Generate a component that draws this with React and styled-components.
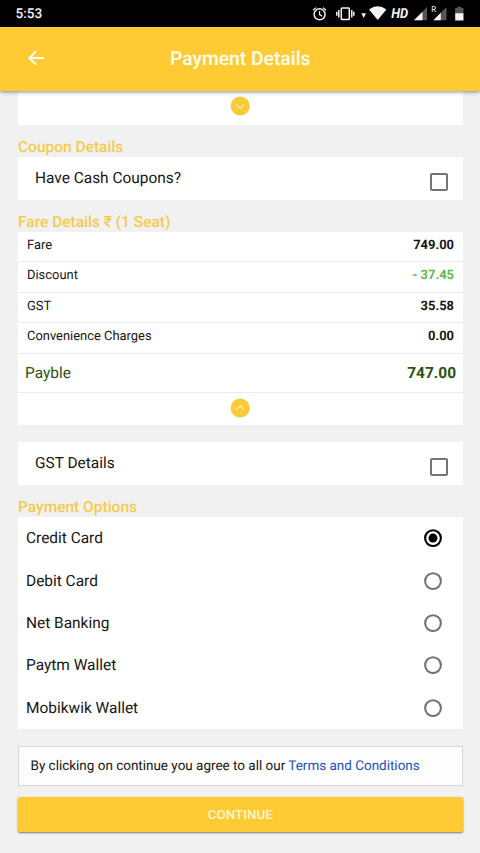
import React, { useState } from "react";
import styled, { createGlobalStyle } from "styled-components";

const GlobalStyle = createGlobalStyle`
  * { box-sizing: border-box; }
  body {
    margin: 0;
    background: #f1f1f1;
    color: #161616;
    font-family: Roboto, "Noto Sans", sans-serif;
    text-rendering: geometricPrecision;
  }
`;

const Screen = styled.div`
  width: 480px;
  height: 853px;
  overflow: hidden;
  background: #f1f1f1;
`;

const StatusBar = styled.div`
  height: 27px;
  padding: 0 14px 0 15.5px;
  display: flex;
  align-items: center;
  justify-content: space-between;
  background: #000;
  color: #f4f4f4;
`;

const Clock = styled.span`
  font-size: 13.6px;
  font-weight: 500;
  line-height: 27px;
  padding-top: 2px;
`;

const StatusIcons = styled.svg`
  width: 156px;
  height: 27px;
  display: block;
  fill: #f4f4f4;
`;

const Header = styled.header`
  position: relative;
  height: 64px;
  display: grid;
  grid-template-columns: 72px 1fr 72px;
  align-items: center;
  background: #ffcb35;
  box-shadow: 0 1px 4px rgba(0, 0, 0, 0.45);
`;

const BackButton = styled.button`
  height: 64px;
  padding: 0 0 2px;
  border: 0;
  background: none;
  display: grid;
  place-items: center;
`;

const BackIcon = styled.svg`
  width: 24px;
  height: 24px;
  display: block;
  fill: none;
  stroke: #fffdf0;
  stroke-width: 2;
`;

const Title = styled.h1`
  margin: 0;
  padding-left: 0.6px;
  text-align: center;
  font-size: 19.3px;
  font-weight: 500;
  line-height: 24px;
  color: #fffdf0;
`;

const Content = styled.main`
  padding: 0 17.5px 0 18px;
`;

const Card = styled.section`
  background: #fff;
`;

const SectionTitle = styled.h2`
  height: 32px;
  margin: 0;
  padding-top: 13px;
  font-size: 15.5px;
  font-weight: 500;
  line-height: 19px;
  color: #f5cb4c;
`;

const ToggleRow = styled.div`
  height: ${(p) => p.$height}px;
  display: flex;
  justify-content: center;
  padding-top: ${(p) => p.$top}px;
`;

const ToggleIcon = styled.svg`
  width: 20px;
  height: 20px;
  display: block;
`;

const CheckRow = styled.label`
  height: 43px;
  margin-top: ${(p) => p.$gap || 0}px;
  padding: 0 14.5px 0 17px;
  display: flex;
  justify-content: space-between;
  background: #fff;
  font-size: 15.45px;
  line-height: 42px;
`;

const CheckBox = styled.input`
  appearance: none;
  width: 18px;
  height: 18px;
  margin: 16px 0 0;
  border: 2px solid #747474;
  border-radius: 2px;
`;

const FareRow = styled.div`
  height: 30.4px;
  padding: 0 8.5px 0 9px;
  display: flex;
  justify-content: space-between;
  border-bottom: 1px solid #ececec;
  font-size: 12.93px;
  line-height: 27px;
`;

const Amount = styled.span`
  font-weight: 700;
  color: ${(p) => (p.$discount ? "#62b84a" : "#161616")};
`;

const PayableRow = styled.div`
  height: 39.4px;
  padding: 0 6.5px 0 7px;
  display: flex;
  justify-content: space-between;
  border-bottom: 1px solid #ececec;
  font-size: 15.45px;
  line-height: 38px;
  color: #2c5211;
`;

const PayableAmount = styled.strong`
  font-weight: 700;
`;

const Option = styled.label`
  height: 42.4px;
  padding: 0 20.5px 0 8px;
  display: flex;
  align-items: center;
  justify-content: space-between;
  font-size: 15.45px;
  line-height: 20px;
`;

const RadioBox = styled.span`
  display: flex;
`;

const HiddenRadio = styled.input`
  appearance: none;
  width: 0;
  height: 0;
  margin: 0;
`;

const RadioIcon = styled.svg`
  width: 18px;
  height: 18px;
  display: block;
  fill: none;
  stroke: ${(p) => (p.$checked ? "#000" : "#747474")};
  stroke-width: 2.1;
`;

const Terms = styled.p`
  height: 40px;
  margin: 17px 0 11px;
  padding-left: 11.5px;
  border: 1px solid #d6d8d8;
  background: #fdfdfd;
  font-size: 13.48px;
  line-height: 39px;
  white-space: nowrap;
`;

const TermsLink = styled.a`
  color: #1b4fc0;
`;

const ContinueButton = styled.button`
  width: 100%;
  height: 35px;
  display: block;
  padding: 0;
  border: 0;
  border-radius: 2px;
  background: #ffcb35;
  box-shadow: 0 1px 2px rgba(0, 0, 0, 0.5);
  color: #fff6d0;
  font-family: inherit;
  font-size: 13.4px;
  font-weight: 500;
  line-height: 35px;
`;

const FARES = [
  { label: "Fare", amount: "749.00" },
  { label: "Discount", amount: "- 37.45", discount: true },
  { label: "GST", amount: "35.58" },
  { label: "Convenience Charges", amount: "0.00" },
];

const OPTIONS = ["Credit Card", "Debit Card", "Net Banking", "Paytm Wallet", "Mobikwik Wallet"];

function Toggle({ up, height, top }) {
  return (
    <ToggleRow $height={height} $top={top}>
      <ToggleIcon viewBox="0 0 20 20">
        <circle cx="10.2" cy="10" r="9.6" fill="#fbca37" />
        <path
          d={up ? "M6.2 11.8 10.2 7.8 14.2 11.8" : "M6.2 8.4 10.2 12.4 14.2 8.4"}
          fill="none"
          stroke="#ffeeb0"
          strokeWidth="1.2"
        />
      </ToggleIcon>
    </ToggleRow>
  );
}

function Radio({ checked, onChange }) {
  return (
    <RadioBox>
      <HiddenRadio type="radio" name="payment" checked={checked} onChange={onChange} />
      <RadioIcon $checked={checked} viewBox="0 0 18 18">
        <circle cx="9" cy="9.1" r="7.9" />
        {checked && <circle cx="9" cy="9.1" r="4.5" fill="#000" stroke="none" />}
      </RadioIcon>
    </RadioBox>
  );
}

function DeviceStatus() {
  return (
    <StatusIcons viewBox="310 0 156 27">
      <g fill="none" stroke="#f4f4f4" strokeWidth="1.5">
        <circle cx="319.6" cy="14.3" r="5.5" />
        <path d="M319.6 11v3.6l2.5 1.6M313.1 10.2l3-2.6M326.1 10.2l-3-2.6" strokeWidth="1.2" />
        <rect x="341.3" y="8" width="8" height="11.5" rx="0.8" />
        <path d="M338.8 10v7.5M351.8 10v7.5M336.8 11.8v4M353.8 11.8v4" strokeWidth="1.5" />
      </g>
      <path d="M361.3 13.2h4.8l-2.4 4.8z" />
      <path d="M369 9.5q8.7-6.4 17.4 0L377.7 20z" />
      <text x="391.2" y="18.3" fontSize="13.8" fontWeight="700" fontStyle="italic" textLength="17" lengthAdjust="spacingAndGlyphs">HD</text>
      <path d="M427 7v13.3h-13z" fill="#555" />
      <path d="M422.5 11.7v8.6h-8.5z" />
      <path d="M446.5 7v13.3h-13z" fill="#555" />
      <path d="M440.8 12.8v7.5h-7.4z" />
      <text x="431.3" y="12" fontSize="8">R</text>
      <path d="M457.3 6.8h4v1.3h2.2v5.2h-8.3V8.1h2.1z" fill="#555" />
      <rect x="455.2" y="13.2" width="8.3" height="7.3" />
    </StatusIcons>
  );
}

export default function App() {
  const [selected, setSelected] = useState(OPTIONS[0]);

  return (
    <Screen>
      <GlobalStyle />
      <StatusBar>
        <Clock>5:53</Clock>
        <DeviceStatus />
      </StatusBar>
      <Header>
        <BackButton aria-label="Back">
          <BackIcon viewBox="0 0 24 24">
            <path d="M20 12H5.5M12.2 5.2 5.4 12l6.8 6.8" />
          </BackIcon>
        </BackButton>
        <Title>Payment Details</Title>
      </Header>
      <Content>
        <Card>
          <Toggle height={34} top={5} />
        </Card>
        <SectionTitle>Coupon Details</SectionTitle>
        <CheckRow>
          Have Cash Coupons?
          <CheckBox type="checkbox" />
        </CheckRow>
        <SectionTitle>Fare Details ₹ (1 Seat)</SectionTitle>
        <Card>
          {FARES.map((fare) => (
            <FareRow key={fare.label}>
              <span>{fare.label}</span>
              <Amount $discount={fare.discount}>{fare.amount}</Amount>
            </FareRow>
          ))}
          <PayableRow>
            <span>Payble</span>
            <PayableAmount>747.00</PayableAmount>
          </PayableRow>
          <Toggle up height={32} top={5} />
        </Card>
        <CheckRow $gap={17}>
          GST Details
          <CheckBox type="checkbox" />
        </CheckRow>
        <SectionTitle>Payment Options</SectionTitle>
        <Card>
          {OPTIONS.map((option) => (
            <Option key={option}>
              {option}
              <Radio checked={selected === option} onChange={() => setSelected(option)} />
            </Option>
          ))}
        </Card>
        <Terms>
          By clicking on continue you agree to all our <TermsLink>Terms and Conditions</TermsLink>
        </Terms>
        <ContinueButton>CONTINUE</ContinueButton>
      </Content>
    </Screen>
  );
}
